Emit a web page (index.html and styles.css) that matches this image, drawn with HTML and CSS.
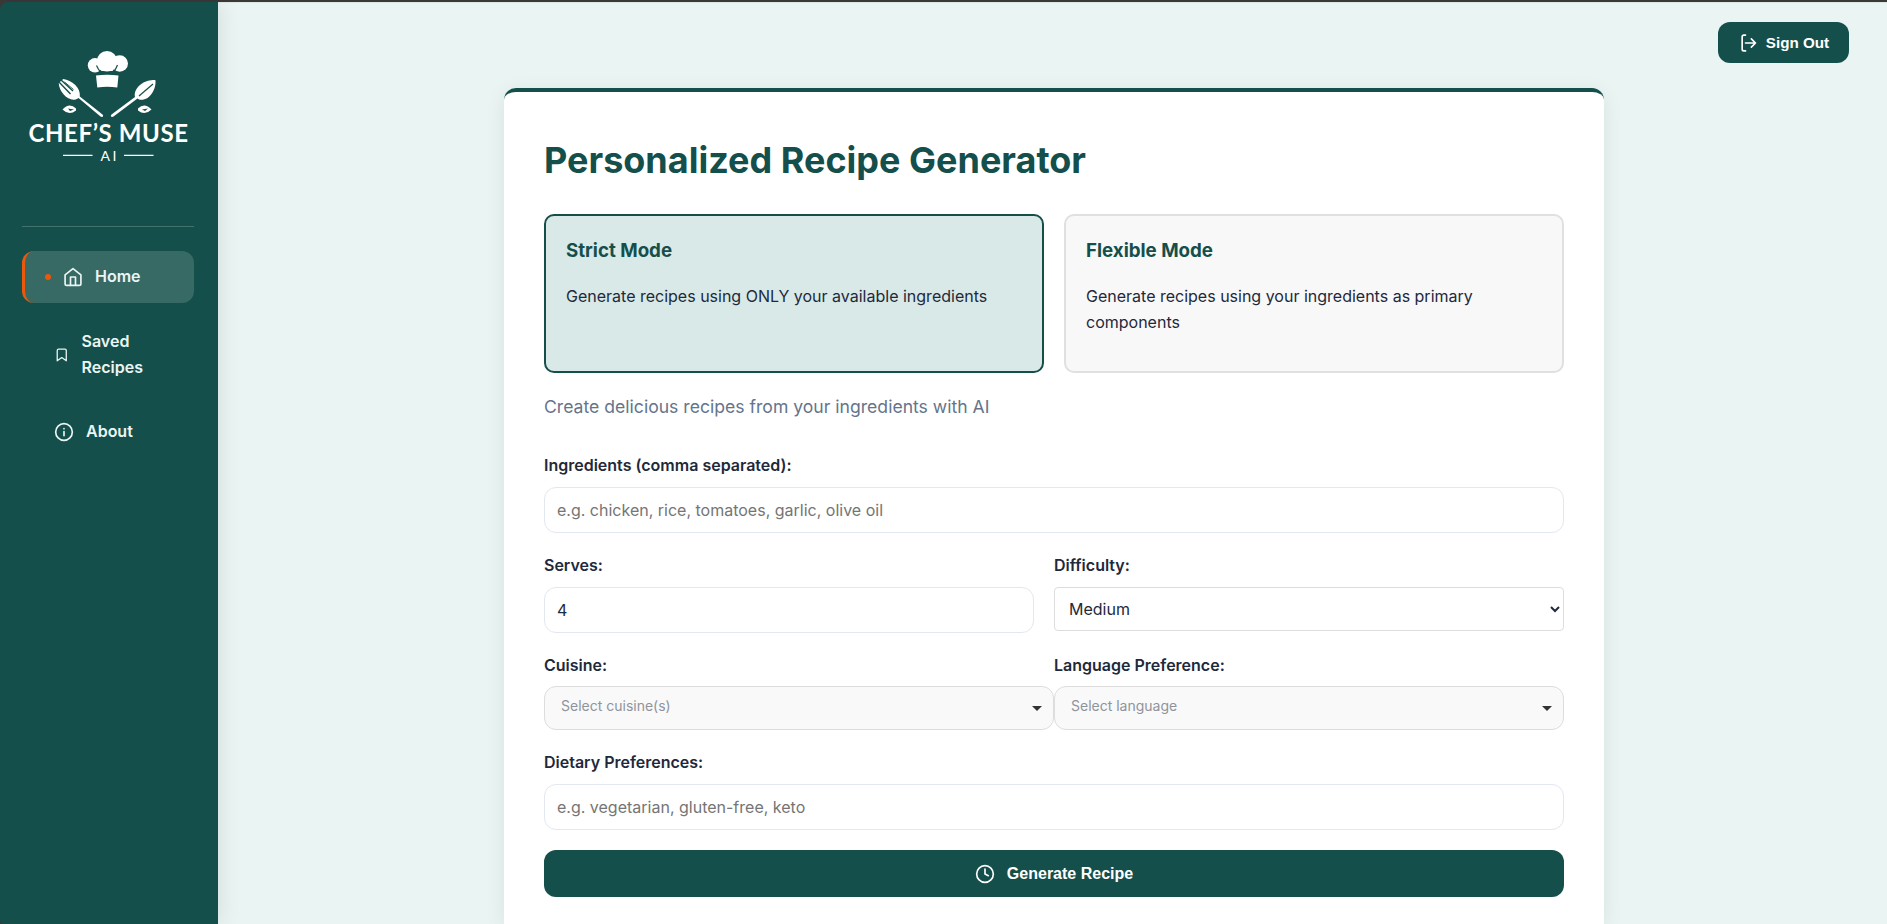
FILE: index.html
```html
<!DOCTYPE html>
<html lang="en">
<head>
<meta charset="utf-8">
<title>Chef's Muse AI</title>
<link rel="stylesheet" href="styles.css">
</head>
<body>
<div class="app">
  <aside class="sidebar">
    <div class="brand">
      <svg class="logo" width="172" height="110" viewBox="22 45 172 110" fill="#fff">
        <!-- chef hat -->
        <circle cx="107" cy="61.200" r="10.200"/>
        <circle cx="95" cy="65.300" r="7.200"/>
        <circle cx="119.700" cy="63.500" r="8.300"/>
        <path d="M97.500 66h19l-4 5h-11z"/>
        <path d="M96.500 65.500q1.500 3.500 4 6.500M117.500 65q-1.500 4-4 7" fill="none" stroke="#154f4b" stroke-width="1.200"/>
        <path d="M96 75.500q11-1.500 22.500 0l-1.200 12q-10-1.500-20 0z"/>
        <!-- fork -->
        <path d="M58.700 83c.300 4 1.800 8 5 11.500 3 3.500 7 5.500 10.500 5.200 2 0 3.500-1 4.300-1.700L100.500 116.500c2 1.300 3.600-.500 2-2L79.800 96.500c.400-4-1-8-4.500-11.500-3.500-3.500-8-5.500-12-6z"/>
        <path d="M58.500 81.500l12 12.500M60.500 79.500l12.500 11.500" fill="none" stroke="#154f4b" stroke-width="1.400"/>
        <path d="M64.500 82l9 7.500" fill="none" stroke="#154f4b" stroke-width=".900"/>
        <!-- leaf spoon -->
        <path d="M155.500 80.500c.500 7-3 14-8 17.500-3.500 2-8 2.500-10 .500L113.500 116.500c-2 1.300-3.600-.500-2-2L135 97c-1-4 1-8.500 5-12 4.500-3.800 10-5 15-5z"/>
        <path d="M153 84l-14 12" fill="none" stroke="#154f4b" stroke-width="1.200"/>
        <!-- leaves -->
        <path d="M62.500 109.500q7-7.500 13.500-1v2q-7 5.500-13.500-1zM151.500 109.500q-7-7.500-13.500-1v2q7 5.500 13.500-1z"/>
        <path d="M68 108.500l6 1-4 1.500zM148 108.500l-6 1 3 1.500z" fill="#154f4b"/>
        <text class="logo-name" x="28.500" y="142" textLength="159.500">CHEF’S MUSE</text>
        <text class="logo-ai" x="100.500" y="160.500" textLength="16">AI</text>
        <path d="M63 155.300h29.500M124 155.300h29.500" stroke="#fff" stroke-width="1.200"/>
      </svg>
    </div>
    <nav class="nav">
      <a class="nav-item active"><span class="dot"></span>
        <svg class="nav-icon home" viewBox="0 0 24 24"><path d="M2.500 9.500L12 2l9.500 7.500V20a2 2 0 0 1-2 2h-15a2 2 0 0 1-2-2z"/><path d="M9 22V12h6v10"/></svg>
        <span>Home</span></a>
      <a class="nav-item saved">
        <svg class="nav-icon small" viewBox="0 0 24 24"><path d="M19 21l-7-5-7 5V5a2 2 0 0 1 2-2h10a2 2 0 0 1 2 2z"/></svg>
        <span>Saved Recipes</span></a>
      <a class="nav-item">
        <svg class="nav-icon" viewBox="0 0 24 24"><circle cx="12" cy="12" r="10"/><path d="M12 16.500v-5M12 8h.01"/></svg>
        <span>About</span></a>
    </nav>
  </aside>
  <main class="main">
    <header class="topbar">
      <button class="signout">
        <svg width="20" height="20" viewBox="0 0 24 24"><path d="M9 21.500H7a2 2 0 0 1-2-2v-15a2 2 0 0 1 2-2h2M16 17l5-5-5-5M21 12H9"/></svg>
        Sign Out</button>
    </header>
    <section class="card">
      <h1>Personalized Recipe Generator</h1>
      <div class="modes">
        <div class="mode selected"><h3>Strict Mode</h3><p>Generate recipes using ONLY your available ingredients</p></div>
        <div class="mode"><h3>Flexible Mode</h3><p>Generate recipes using your ingredients as primary components</p></div>
      </div>
      <p class="subtitle">Create delicious recipes from your ingredients with AI</p>
      <form class="form">
        <div class="field">
          <label>Ingredients (comma separated):</label>
          <input class="input" type="text" placeholder="e.g. chicken, rice, tomatoes, garlic, olive oil">
        </div>
        <div class="row">
          <div class="field serves"><label>Serves:</label><input class="input" type="text" value="4"></div>
          <div class="field"><label>Difficulty:</label><select class="select"><option>Medium</option></select></div>
        </div>
        <div class="row pickers">
          <div class="field"><label>Cuisine:</label><div class="picker"><span>Select cuisine(s)</span><i class="caret"></i></div></div>
          <div class="field"><label>Language Preference:</label><div class="picker"><span>Select language</span><i class="caret"></i></div></div>
        </div>
        <div class="field">
          <label>Dietary Preferences:</label>
          <input class="input" type="text" placeholder="e.g. vegetarian, gluten-free, keto">
        </div>
        <button class="generate" type="button">
          <svg width="20" height="20" viewBox="0 0 24 24"><circle cx="12" cy="12" r="10"/><path d="M12 6v6l4 2"/></svg>
          Generate Recipe</button>
      </form>
    </section>
  </main>
</div>
</body>
</html>
```
FILE: styles.css
```css
* { box-sizing: border-box; }
body {
  margin: 0;
  height: 924px;
  overflow: hidden;
  background: #3b3838;
  color: #1e293b;
  font-family: Inter, "Liberation Sans", sans-serif;
  font-size: 16px;
  line-height: 1.6;
}
.app {
  display: flex;
  height: 924px;
  border-top: 2px solid #3b3838;
}
.sidebar {
  position: relative;
  z-index: 1;
  width: 218px;
  flex: none;
  padding: 43px 24px 0 22px;
  background: #154f4b;
  border-radius: 8px 0 0 4px;
  box-shadow: 4px 0 20px rgba(0, 0, 0, 0.08);
}
.brand {
  height: 182px;
  border-bottom: 1px solid rgba(255, 255, 255, 0.2);
}
.logo { display: block; overflow: visible; }
.logo-name { font: 700 24px Lato, sans-serif; }
.logo-ai { font: 400 14px Lato, sans-serif; }
.nav {
  display: flex;
  flex-direction: column;
  gap: 12px;
  padding-top: 24px;
}
.nav-item {
  display: flex;
  align-items: center;
  gap: 12px;
  min-height: 52px;
  padding: 0 16px 0 32px;
  border-radius: 12px;
  color: #ebf5f3;
  font-weight: 600;
}
.nav-item.saved { min-height: 79px; }
.nav-item.active {
  padding-left: 20px;
  border-left: 3px solid #ea580c;
  background: rgba(255, 255, 255, 0.15);
}
.dot {
  width: 6px;
  height: 6px;
  border-radius: 50%;
  background: #ea580c;
}
.nav-icon {
  width: 20px;
  height: 20px;
  flex: none;
  fill: none;
  stroke: currentColor;
  stroke-width: 2;
  stroke-linecap: round;
  stroke-linejoin: round;
}
.nav-icon.small { width: 15.500px; height: 16px; }
.main {
  display: flex;
  flex-direction: column;
  flex: 1;
  padding: 20px 38px 0;
  border-top: 1px solid #dfe7e6;
  padding-top: 19px;
  background: #eaf4f3;
}
.topbar { display: flex; justify-content: flex-end; height: 66px; flex: none; }
.signout, .generate {
  display: flex;
  align-items: center;
  justify-content: center;
  border: 0;
  background: #154f4b;
  color: #fff;
}
.signout {
  width: 131px;
  height: 41px;
  padding: 0;
  gap: 8px;
  border-radius: 12px;
  font: 700 15.200px "Liberation Sans", Arial, sans-serif;
}
.signout svg, .generate svg {
  fill: none;
  stroke: #fff;
  stroke-width: 2;
  stroke-linecap: round;
  stroke-linejoin: round;
}
.card {
  width: 1100px;
  flex: 1;
  min-height: 0;
  margin: 0 0 0 248px;
  padding: 39px 40px 0;
  border-top: 4px solid #154f4b;
  border-radius: 12px 12px 0 0;
  background: #fff;
  box-shadow: 0 4px 20px rgba(0, 0, 0, 0.08);
}
h1 {
  margin: 0 0 25px;
  color: #154f4b;
  font-size: 36px;
  line-height: 58px;
  font-weight: 700;
}
.modes { display: flex; gap: 20px; }
.mode {
  flex: 1;
  height: 159px;
  padding: 20px;
  border: 2px solid #e0e0e0;
  border-radius: 10px;
  background: #f8f8f8;
}
.mode.selected { border-color: #154f4b; background: #d8e9e8; }
.mode h3 {
  margin: 0 0 19px;
  color: #154f4b;
  font-size: 18.720px;
  font-weight: 700;
  line-height: 29px;
}
.mode p { margin: 0; }
.subtitle {
  margin: 20px 0 32px;
  color: #64748b;
  font-size: 17.600px;
  line-height: 28px;
}
.form { display: flex; flex-direction: column; }
.field { flex: 1; margin-bottom: 20px; }
label {
  display: block;
  height: 26px;
  margin-bottom: 8px;
  font-weight: 600;
}
.input, .select {
  display: block;
  width: 100%;
  color: #1e293b;
  background: #fff;
  font: 400 16px Inter, sans-serif;
}
.input {
  height: 46px;
  padding: 12px;
  border: 1px solid #e2e8f0;
  border-radius: 12px;
}
.row { display: grid; grid-template-columns: 1fr 1fr; }
.serves { padding-right: 20px; }
.select {
  height: 44px;
  padding: 10px;
  border: 1px solid #ddd;
  border-radius: 4px;
}
.pickers label { margin-bottom: 7px; }
.picker {
  display: flex;
  align-items: center;
  justify-content: space-between;
  height: 44px;
  padding: 0 11px 0 16px;
  border: 1px solid #ddd;
  border-radius: 12px;
  background: #f9f9f9;
  color: #8f949c;
  font-size: 14px;
}
.picker span { padding-bottom: 3px; }
.caret {
  border: 5px solid transparent;
  border-top-color: #333;
  border-bottom: 0;
}
.generate {
  width: 100%;
  height: 47px;
  gap: 12px;
  border-radius: 12px;
  font: 700 16px "Liberation Sans", Arial, sans-serif;
}
```
